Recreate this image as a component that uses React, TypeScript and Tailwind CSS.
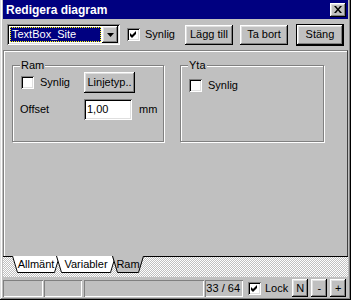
const raised =
  "shadow-[inset_-1px_-1px_0_#000,inset_1px_1px_0_#fff,inset_-2px_-2px_0_#808080,inset_2px_2px_0_#dfdfdf]";
const sunken =
  "shadow-[inset_1px_1px_0_#808080,inset_-1px_-1px_0_#fff,inset_2px_2px_0_#000,inset_-2px_-2px_0_#dfdfdf]";
const thin = "shadow-[inset_1px_1px_0_#808080,inset_-1px_-1px_0_#fff]";

function Check({ checked }: { checked?: boolean }) {
  return (
    <span className={`w-[13px] h-[13px] shrink-0 bg-white flex items-center justify-center ${sunken}`}>
      {checked && (
        <svg width="7" height="7" viewBox="0 0 7 7">
          <polygon points="0,2 2,4 6,0 6,3 2,7 0,5" fill="#000" />
        </svg>
      )}
    </span>
  );
}

function Button({ label, w, h = 20, def }: { label: string; w: number; h?: number; def?: boolean }) {
  return (
    <div
      className={`shrink-0 flex items-center justify-center whitespace-nowrap ${raised} ${def ? "outline outline-1 outline-black" : ""}`}
      style={{ width: w, height: h }}
    >
      {label}
    </div>
  );
}

function Group({ title, children, w }: { title: string; children?: React.ReactNode; w: number }) {
  return (
    <div
      className="relative h-[77px] border border-[#808080] shadow-[inset_1px_1px_0_#fff,1px_1px_0_#fff]"
      style={{ width: w }}
    >
      <span className="absolute -top-[8px] left-[7px] bg-[#c0c0c0] px-[1px] leading-[14px]">{title}</span>
      {children}
    </div>
  );
}

function Tab({ label, w, active }: { label: string; w: number; active?: boolean }) {
  return (
    <div className="relative h-[17px] -ml-[4px] first:ml-0 flex items-center justify-center shrink-0" style={{ width: w }}>
      <svg className="absolute inset-0" width={w} height={17}>
        <polygon points={`0,0 5,16 ${w - 5},16 ${w},0`} fill={active ? "#c0c0c0" : "#fff"} />
        <polyline
          points={`0.5,0 5.5,16.5 ${w - 5.5},16.5 ${w - 0.5},0`}
          fill="none"
          stroke="#000"
          strokeWidth="1"
        />
      </svg>
      <span className="relative leading-[13px] -mt-[1px]">{label}</span>
    </div>
  );
}

export default function App() {
  return (
    <div
      className="w-[351px] h-[300px] bg-[#c0c0c0] flex flex-col px-[3px] pb-[3px] shadow-[inset_-1px_-1px_0_#000,inset_1px_0_0_#dfdfdf,inset_-2px_-2px_0_#808080,inset_2px_0_0_#fff] text-[11px] text-black"
      style={{ fontFamily: '"Liberation Sans", Arial, sans-serif' }}
    >
      {/* title bar */}
      <div className="h-[19px] shrink-0 bg-[#000080] flex items-center justify-between pl-[3px] pr-[2px]">
        <span className="text-white font-bold text-[12px] leading-none">Redigera diagram</span>
        <div className={`w-[16px] h-[14px] bg-[#c0c0c0] flex items-center justify-center ${raised}`}>
          <svg width="8" height="7" viewBox="0 0 8 7">
            <path d="M0 0h2l2 2.5L6 0h2L5 3.5 8 7H6L4 4.5 2 7H0l3-3.5z" fill="#000" />
          </svg>
        </div>
      </div>

      {/* toolbar */}
      <div className="h-[31px] shrink-0 flex items-center pl-[4px]">
        <div className={`w-[113px] h-[21px] shrink-0 bg-white p-[2px] flex ${sunken}`}>
          <div className="flex-1 m-[1px] bg-[#000080] outline outline-1 outline-dotted outline-[#ffff00] -outline-offset-1 flex items-center pl-[2px]">
            <span className="text-white leading-none">TextBox_Site</span>
          </div>
          <div className={`w-[16px] h-[17px] flex items-center justify-center bg-[#c0c0c0] ${raised}`}>
            <svg width="7" height="4" viewBox="0 0 7 4">
              <polygon points="0,0 7,0 3.5,4" fill="#000" />
            </svg>
          </div>
        </div>
        <div className="ml-[7px] flex items-center gap-[5px]">
          <Check checked />
          <span>Synlig</span>
        </div>
        <div className="ml-[10px] flex items-center gap-[7px]">
          <Button label="Lägg till" w={48} />
          <Button label="Ta bort" w={48} />
          <div className="ml-[2px]">
            <Button label="Stäng" w={46} def />
          </div>
        </div>
      </div>

      {/* tab page */}
      <div className="h-[206px] shrink-0 border-t border-l border-[#808080] border-r border-r-[#404040] shadow-[inset_1px_1px_0_#fff] flex gap-[16px] pl-[8px] pt-[14px]">
        <Group title="Ram" w={152}>
          <div className="flex items-center pl-[8px] pt-[6px]">
            <div className="flex items-center gap-[6px] w-[63px]">
              <Check />
              <span>Synlig</span>
            </div>
            <Button label="Linjetyp.." w={51} h={21} />
          </div>
          <div className="flex items-center pl-[7px] pt-[6px]">
            <span className="w-[64px]">Offset</span>
            <div className={`w-[48px] h-[21px] bg-white flex items-center pl-[3px] ${sunken}`}>1,00</div>
            <span className="ml-[7px]">mm</span>
          </div>
        </Group>
        <Group title="Yta" w={144}>
          <div className="flex items-center gap-[6px] pl-[8px] pt-[11px]">
            <Check />
            <span>Synlig</span>
          </div>
        </Group>
      </div>

      {/* sheet tabs */}
      <div className="h-[21px] shrink-0 border-t border-black bg-[repeating-conic-gradient(#c0c0c0_0_25%,#fff_0_50%)] bg-[length:2px_2px] flex pl-[9px]">
        <div className="flex -mt-[1px]">
          <Tab label="Allmänt" w={48} />
          <Tab label="Variabler" w={60} />
          <Tab label="Ram" w={32} active />
        </div>
      </div>

      {/* status bar */}
      <div className="h-[20px] shrink-0 mt-[1px] flex items-center whitespace-nowrap">
        <div className={`w-[40px] h-[17px] shrink-0 ${thin}`} />
        <div className={`w-[38px] h-[17px] shrink-0 ml-[1px] ${thin}`} />
        <div className={`w-[120px] h-[17px] shrink-0 ml-[2px] ${thin}`} />
        <div className={`w-[38px] h-[17px] shrink-0 ml-[1px] ${thin} flex items-center justify-end pr-[3px]`}>33 / 64</div>
        <div className="ml-[5px] flex items-center gap-[4px] shrink-0">
          <Check checked />
          <span>Lock</span>
        </div>
        <div className="ml-[4px] flex gap-[3px] shrink-0">
          <Button label="N" w={16} h={18} />
          <Button label="-" w={16} h={18} />
          <Button label="+" w={16} h={18} />
        </div>
      </div>
    </div>
  );
}
